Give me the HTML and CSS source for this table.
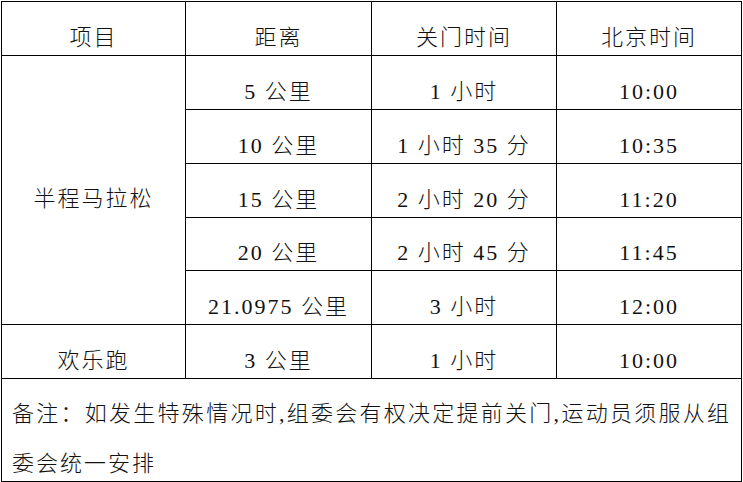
FILE: index.html
```html
<!DOCTYPE html>
<html lang="zh-CN">
<head>
<meta charset="utf-8">
<title>关门时间</title>
<link rel="stylesheet" href="styles.css">
</head>
<body>
<table class="schedule">
  <colgroup>
    <col class="c1">
    <col class="c2">
    <col class="c3">
    <col class="c4">
  </colgroup>
  <tr class="row">
    <td>项目</td>
    <td>距离</td>
    <td>关门时间</td>
    <td>北京时间</td>
  </tr>
  <tr class="row">
    <td class="merged" rowspan="5">半程马拉松</td>
    <td>5 公里</td>
    <td>1 小时</td>
    <td>10:00</td>
  </tr>
  <tr class="row">
    <td>10 公里</td>
    <td>1 小时 35 分</td>
    <td>10:35</td>
  </tr>
  <tr class="row">
    <td>15 公里</td>
    <td>2 小时 20 分</td>
    <td>11:20</td>
  </tr>
  <tr class="row short">
    <td>20 公里</td>
    <td>2 小时 45 分</td>
    <td>11:45</td>
  </tr>
  <tr class="row">
    <td>21.0975 公里</td>
    <td>3 小时</td>
    <td>12:00</td>
  </tr>
  <tr class="row">
    <td>欢乐跑</td>
    <td>3 公里</td>
    <td>1 小时</td>
    <td>10:00</td>
  </tr>
  <tr class="notes-row">
    <td class="notes" colspan="4"><div class="notes-text">备注：如发生特殊情况时,组委会有权决定提前关门,运动员须服从组委会统一安排</div></td>
  </tr>
</table>
</body>
</html>
```

FILE: styles.css
```css
html, body {
  margin: 0;
  padding: 0;
  background: #ffffff;
}

body {
  padding: 1px 0 0 1px;
  font-family: "Liberation Serif", "Noto Sans CJK SC", serif;
  color: #111111;
}

.schedule {
  border-collapse: collapse;
  table-layout: fixed;
  width: 740px;
  font-size: 22px;
  font-weight: 300;
  letter-spacing: 2px;
}

.c1 { width: 184px; }
.c2 { width: 186px; }
.c3 { width: 185px; }
.c4 { width: 185px; }

.schedule td {
  border: 1px solid #000000;
  text-align: center;
  vertical-align: middle;
  padding: 18px 0 0 0;
  line-height: 24px;
  white-space: nowrap;
}

.row { height: 54px; }
.row.short { height: 53px; }

.notes-row { height: 102px; }

.schedule td.notes {
  text-align: justify;
  vertical-align: top;
  white-space: normal;
  padding: 10px 10px 0 10px;
}

.notes-text {
  height: 92px;
  line-height: 49.5px;
  text-align: justify;
}
```
